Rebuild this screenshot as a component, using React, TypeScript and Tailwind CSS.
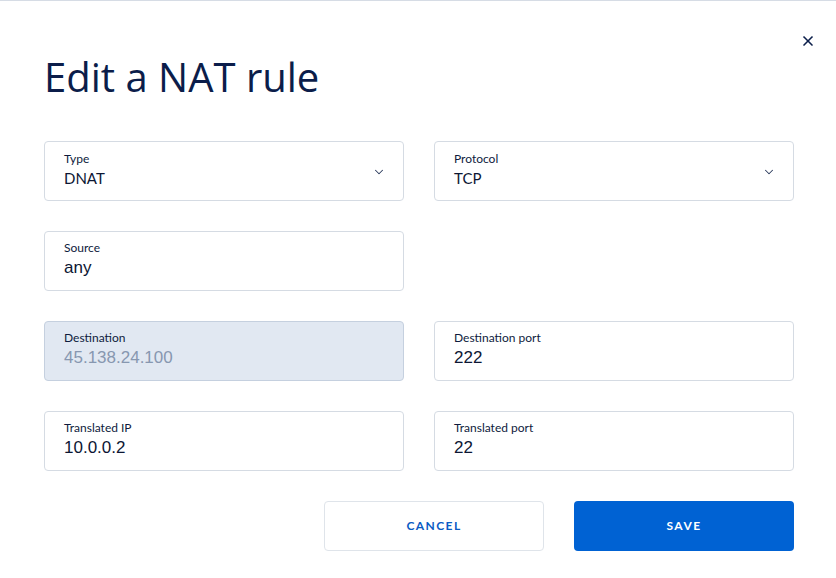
import { ChevronDown, X } from "lucide-react";

interface FieldProps {
  label: string;
  value: string;
  select?: boolean;
  disabled?: boolean;
}

// select values use the UI font, text inputs use the system-ish one
const Field: React.FC<FieldProps> = ({ label, value, select, disabled }) => (
  <div
    className={`relative flex h-[60px] flex-col justify-center rounded-[4px] border px-[19px] pb-[4px] ${
      disabled ? "border-[#c5d0df] bg-[#e1e8f2]" : "border-[#d5dbe3] bg-white"
    }`}
  >
    <span className="text-[12px] leading-[15px] text-[#0e1b3d]">{label}</span>
    <span
      className={`leading-[20px] ${
        select
          ? "mt-[2px] text-[15px]"
          : "mt-[3px] text-[17px] font-['Liberation_Sans',sans-serif]"
      } ${disabled ? "text-[#8797b0]" : "text-[#0c1633]"}`}
    >
      {value}
    </span>
    {select && (
      <ChevronDown
        className="absolute right-[17px] top-[23px] h-[14px] w-[14px] text-[#2b3a5c]"
        strokeWidth={1.75}
      />
    )}
  </div>
);

export default function App() {
  return (
    <div
      className="relative h-[578px] w-[836px] border-t border-[#d6dce5] bg-white"
      style={{ fontFamily: "Lato, 'Noto Sans', sans-serif" }}
    >
      <button className="absolute right-[20px] top-[32px] text-[#0c1f4b]">
        <X className="h-[16px] w-[16px]" strokeWidth={2.5} />
      </button>

      <div className="pl-[44px] pr-[42px] pt-[52px]">
        <h1 className="font-['Open_Sans',sans-serif] text-[40px] leading-[48px] font-normal text-[#0b1d4a]">
          Edit a NAT rule
        </h1>

        <div className="mt-[40px] grid grid-cols-2 gap-x-[30px] gap-y-[30px]">
          <Field label="Type" value="DNAT" select />
          <Field label="Protocol" value="TCP" select />
          <Field label="Source" value="any" />
          <div />
          <Field label="Destination" value="45.138.24.100" disabled />
          <Field label="Destination port" value="222" />
          <Field label="Translated IP" value="10.0.0.2" />
          <Field label="Translated port" value="22" />
        </div>

        <div className="mt-[30px] flex justify-end gap-[30px]">
          <button className="h-[50px] w-[220px] rounded-[4px] border border-[#dfe4ea] bg-white text-[12px] font-bold tracking-[0.12em] text-[#0a5bc4]">
            CANCEL
          </button>
          <button className="h-[50px] w-[220px] rounded-[4px] bg-[#0062d3] text-[12px] font-bold tracking-[0.12em] text-white">
            SAVE
          </button>
        </div>
      </div>
    </div>
  );
}
